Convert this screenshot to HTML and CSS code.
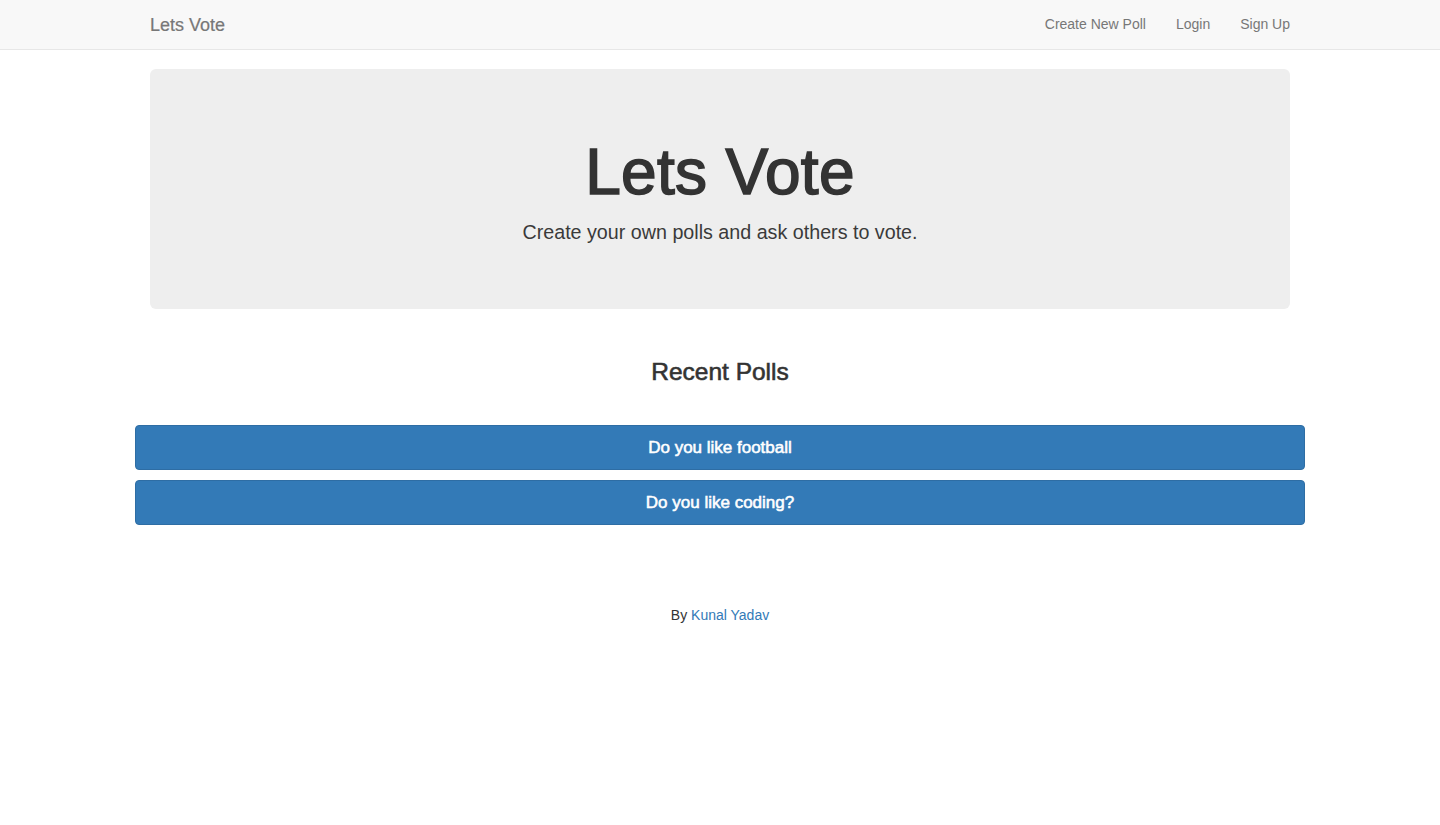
FILE: index.html
```html
<!DOCTYPE html>
<html lang="en">
<head>
<meta charset="utf-8">
<title>Lets Vote</title>
<link rel="stylesheet" href="styles.css">
</head>
<body>
<nav class="navbar">
  <div class="nav-inner">
    <a class="brand" href="#">Lets Vote</a>
    <ul class="nav-links">
      <li><a href="#">Create New Poll</a></li>
      <li><a href="#">Login</a></li>
      <li><a href="#">Sign Up</a></li>
    </ul>
  </div>
</nav>
<main class="container">
  <section class="jumbotron">
    <h1 class="hero-title">Lets Vote</h1>
    <p class="hero-sub">Create your own polls and ask others to vote.</p>
  </section>
  <h3 class="section-title">Recent Polls</h3>
  <div class="poll-list">
    <a class="poll-btn" href="#">Do you like football</a>
    <a class="poll-btn" href="#">Do you like coding?</a>
  </div>
  <footer class="footer">By <a href="#">Kunal Yadav</a></footer>
</main>
</body>
</html>
```
FILE: styles.css
```css
* { box-sizing: border-box; }
html, body { margin: 0; padding: 0; }
body {
  font-family: "Liberation Sans", Arial, Helvetica, sans-serif;
  font-size: 14px;
  line-height: 1.42857;
  color: #333;
  background: #fff;
}
a { text-decoration: none; }

.navbar {
  background: #f8f8f8;
  border-bottom: 1px solid #e7e7e7;
  height: 50px;
}
.nav-inner {
  width: 1170px;
  margin: 0 auto;
  padding: 0 0 0 15px;
  display: flex;
  align-items: center;
  justify-content: space-between;
  height: 49px;
}
.brand {
  font-size: 18px;
  color: #777;
  line-height: 20px;
  -webkit-text-stroke: 0.2px #777;
}
.nav-links {
  list-style: none;
  margin: 0;
  padding: 0;
  display: flex;
}
.nav-links a {
  display: block;
  padding: 14px 15px 15px;
  color: #777;
  line-height: 20px;
  font-size: 14px;
}

.container {
  width: 1170px;
  margin: 0 auto;
  padding: 0 15px;
}
.jumbotron {
  margin-top: 19px;
  background: #eee;
  border-radius: 6px;
  padding: 48px 60px;
  text-align: center;
  margin-bottom: 30px;
}
.hero-title {
  font-size: 64px;
  line-height: 1.083;
  font-weight: normal;
  letter-spacing: 0.3px;
  -webkit-text-stroke: 1.6px #333;
  margin: 21px 0 11px;
  color: #333;
}
.hero-sub {
  font-size: 19.7px;
  line-height: 29.4px;
  font-weight: 300;
  margin: 0 0 13px;
  color: #3a3a3a;
}
.section-title {
  text-align: center;
  font-size: 24.5px;
  line-height: 26px;
  font-weight: normal;
  -webkit-text-stroke: 0.6px #333;
  margin: 50px 0 39px;
  padding-bottom: 1px;
}
.poll-list {
  margin: 0 -15px;
  display: flex;
  flex-direction: column;
  gap: 10px;
}
.poll-btn {
  display: block;
  height: 45px;
  line-height: 43px;
  background: #337ab7;
  border: 1px solid #2e6da4;
  border-radius: 4px;
  color: #fff;
  text-align: center;
  font-size: 17px;
  font-weight: normal;
  -webkit-text-stroke: 0.55px #fff;
}
.footer {
  text-align: center;
  margin-top: 80px;
  line-height: 20px;
  font-size: 14px;
}
.footer a { color: #337ab7; }
```
